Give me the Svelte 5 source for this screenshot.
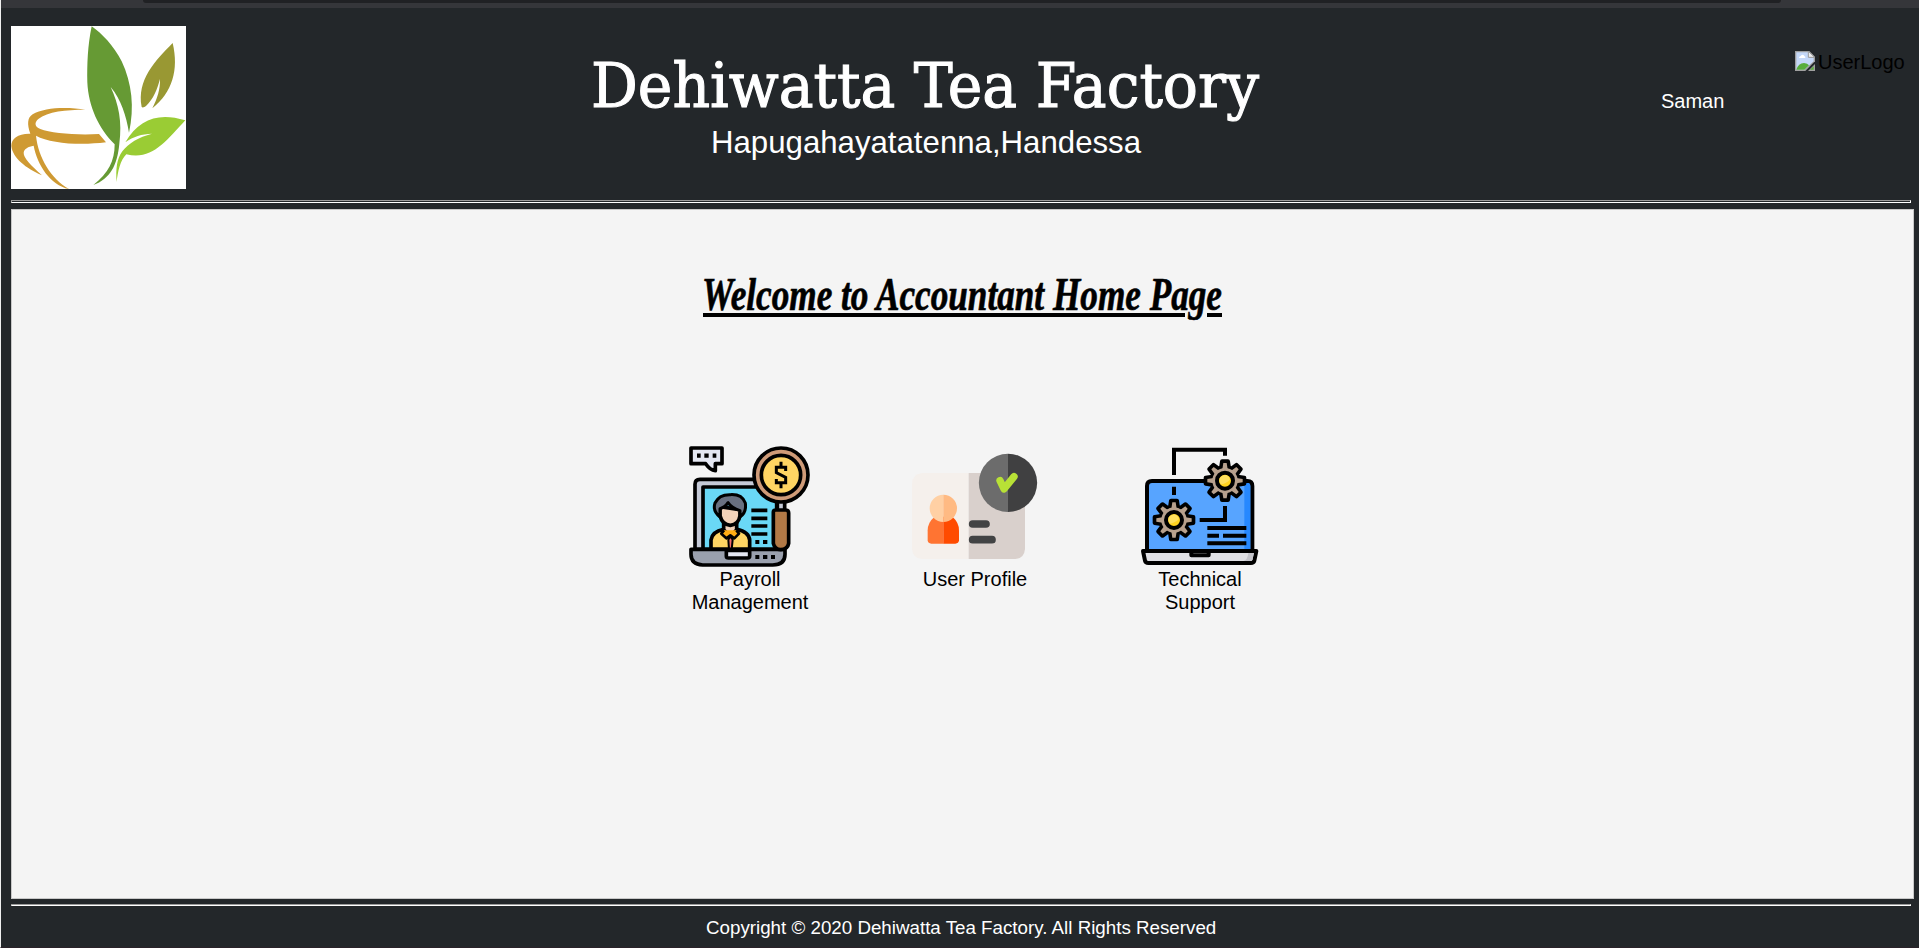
<script>
  const teeth = [0, 45, 90, 135, 180, 225, 270, 315];
  const gears = [
    { x: 132, y: 255 },
    { x: 285, y: 137 }
  ];
</script>

<div class="page">
  <div class="strip"><div class="pill"></div></div>

  <header>
    <svg class="logo" viewBox="33 78 525 489" preserveAspectRatio="none">
      <rect x="33" y="78" width="525" height="489" fill="#fff" />
      <path d="M256 329C205 320 132 321 98 343C82 353 81 373 91 401C54 400 34 415 34 438C38 474 78 505 126 526C93 496 70 473 71 458C73 446 84 440 101 437C111 493 150 555 207 567C153 536 115 473 108 407C150 430 239 437 318 427L297 402C232 406 153 400 121 387C103 380 103 367 115 357C143 334 198 329 256 329Z" fill="#cf9a33" />
      <path d="M275 79C263 137 261 194 262 247C265 319 297 388 344 433C344 484 325 519 280 555C330 536 352 497 358 431C367 366 356 312 332 261C363 298 379 348 387 398C404 323 396 250 365 184C341 137 306 101 275 79Z" fill="#669a34" />
      <path d="M518 129C465 183 410 239 425 321C428 324 434 321 438 318C460 298 472 267 480 237C481 267 472 295 457 325C517 277 537 210 518 129Z" fill="#999833" />
      <path d="M556 361C477 337 418 355 376 427C401 409 424 402 456 401C416 411 385 430 367 454C350 476 347 510 350 546C353 516 361 480 379 463C456 482 497 424 556 361Z" fill="#9acc34" />
    </svg>

    <div class="brand">
      <svg class="title" width="670" height="84" viewBox="0 0 670 84">
        <text x="1" y="63" textLength="668" lengthAdjust="spacingAndGlyphs">Dehiwatta Tea Factory</text>
      </svg>
      <div class="address">Hapugahayatatenna,Handessa</div>
    </div>

    <div class="user">Saman</div>
    <div class="avatar">
      <svg width="20" height="20" viewBox="0 0 60 60">
        <path d="M0 0H43L60 17V31L31 60H0Z" fill="#a0a0a0" />
        <path d="M4 4H40L56 20V31L28 56H4Z" fill="#c5d8f8" />
        <path d="M12 21Q12 16 17 15Q23 7 28 15Q32 16 31 21Z" fill="#fff" />
        <path d="M4 56Q10 37 27 36Q38 37 42 43L28 56Z" fill="#58ad3b" />
        <path d="M40 1V19H59Z" fill="#eee" stroke="#999" stroke-width="3" />
        <path d="M60 39V60H39Z" fill="#a0a0a0" />
        <path d="M56 46V56H45Z" fill="#58ad3b" />
      </svg>
      <span>UserLogo</span>
    </div>
  </header>

  <div class="rule top"></div>

  <main>
    <svg class="welcome" width="526" height="60" viewBox="0 0 526 60">
      <text x="2" y="43" textLength="520" lengthAdjust="spacingAndGlyphs">Welcome to Accountant Home Page</text>
      <path d="M3 48H485M507 48H522" stroke="#000" stroke-width="4" />
    </svg>

    <div class="menu">
      <div class="item">
        <svg width="140" height="133" viewBox="0 0 420 399" stroke="#000" stroke-width="11" stroke-linejoin="round">
          <path d="M33 39H126V86H106V107Q90 105 77 86H33Z" fill="#e4e7f2" />
          <path d="M51 62H62M73 62H86M98 62H109" fill="none" stroke-width="13" />
          <path d="M45 343V148Q45 133 60 133H300V343Z" fill="#c5cad7" />
          <path d="M69 343V156H290V343Z" fill="#6ad8f6" />
          <path d="M214 226H262M214 250H262M214 273H262M214 297H262" />
          <path d="M226 321H238M249 321H262" stroke-width="12" />
          <path d="M93 343V315Q96 290 131 283H170Q207 290 209 315V343Z" fill="#ffd563" />
          <path d="M131 262V284L151 305L170 284V262Z" fill="#f2d2b9" />
          <path d="M120 215V242Q127 269 151 271Q176 268 180 242V224Z" fill="#f2d2b9" />
          <path d="M120 246Q97 228 105 204Q117 178 151 179Q186 177 196 204Q200 233 180 246V227Q154 219 144 203Q135 217 120 221Z" fill="#697080" stroke-width="9" />
          <path d="M132 286L124 296L139 310L151 301L163 310L177 296L169 286" fill="#ffad13" stroke-width="8" />
          <path d="M151 304L145 314L147 344H155L158 314Z" fill="#f06b6d" stroke-width="6" />
          <path d="M33 343H315V358Q315 390 278 390H68Q33 388 33 358Z" fill="#9aa0ad" />
          <path d="M139 346V364Q139 369 146 369H203Q209 369 209 363V346Z" fill="#e4e7f2" />
          <path d="M226 366H238M249 366H262M273 366H285" stroke-width="12" />
          <path d="M292 196V230H314V196Z" fill="#c5cad7" />
          <path d="M280 231Q280 225 287 225H317Q326 225 326 234V325Q323 343 302 344Q284 343 280 325Z" fill="#b27946" />
          <circle cx="303" cy="120" r="81" fill="#cf9b78" />
          <circle cx="303" cy="120" r="59" fill="#ffd563" />
          <path d="M317 108V97H289V113L317 127V143H289V132M303 80V97M303 143V160" fill="none" stroke-width="9" stroke-linejoin="miter" />
        </svg>
        <div>Payroll<br />Management</div>
      </div>

      <div class="item">
        <svg width="140" height="133" viewBox="15 -15 420 399">
          <path d="M206 99H66Q36 103 36 132V327Q38 355 66 357H206Z" fill="#f5f0ec" />
          <path d="M206 99H346Q375 102 375 132V327Q373 355 346 357H206Z" fill="#d9d0cc" />
          <path d="M130 230H104Q83 247 83 271V301Q84 311 94 311H130Z" fill="#ff7432" />
          <path d="M130 230H157Q177 247 177 271V301Q176 311 166 311H130Z" fill="#ff4b00" />
          <path d="M130 164A41 41 0 0 0 130 246Z" fill="#ffd0a4" />
          <path d="M130 164A41 41 0 0 1 130 246Z" fill="#ffba83" />
          <path d="M218 252H258M218 299H276" stroke="#424344" stroke-width="23" stroke-linecap="round" />
          <path d="M324 41A87.500 87.500 0 0 0 324 216Z" fill="#6c6c6c" />
          <path d="M324 41A87.500 87.500 0 0 1 324 216Z" fill="#404041" />
          <path d="M300 122L312 147L342 110" fill="none" stroke="#b8e136" stroke-width="22" stroke-linecap="round" stroke-linejoin="round" />
        </svg>
        <div>User Profile</div>
      </div>

      <div class="item">
        <svg width="140" height="133" viewBox="0 0 420 399" stroke="#000" stroke-width="12" stroke-linejoin="round">
          <path d="M51 348V153Q51 138 66 138H352Q367 138 367 153V348Z" fill="#57a4ff" />
          <path d="M343 144H356Q361 145 361 154V343H343Z" fill="#2688ff" stroke="none" />
          <path d="M132 120V44H285V62M132 155V180M285 213V255H209" fill="none" stroke-linejoin="miter" />
          <path d="M232 279H349M232 302H267M279 302H349M232 325H349" />
          <path d="M39 348H184V361H236V348H379L373 377Q371 384 363 384H55Q47 384 45 377Z" fill="#e0e0e4" />
          <path d="M355 354H372L367 376L360 378H340Q353 375 355 354Z" fill="#c5c5cb" stroke="none" />
          {#each gears as g}
            <g transform="translate({g.x} {g.y})">
              <circle r="46" stroke="none" />
              {#each teeth as a}
                <path d="M-12 -38L-9 -58H9L12 -38Z" transform="rotate({a})" />
              {/each}
              <circle r="38" fill="#b8a18d" stroke="none" />
              {#each teeth as a}
                <path d="M-8 -34L-5 -53H5L8 -34Z" transform="rotate({a})" fill="#b8a18d" stroke="none" />
              {/each}
              <circle r="24" fill="#ffd31f" />
              <path d="M-16 -8Q-6 -19 5 -16Q13 -12 15 -3Q1 10 -12 11Q-19 3 -16 -8Z" fill="#ffe05e" stroke="none" />
            </g>
          {/each}
        </svg>
        <div>Technical<br />Support</div>
      </div>
    </div>
  </main>

  <div class="rule bottom"></div>
  <footer>Copyright © 2020 Dehiwatta Tea Factory. All Rights Reserved</footer>
</div>

<style>
  :global(body) { margin: 0; background: #23272a; }
  .page {
    box-sizing: border-box;
    width: 1919px;
    height: 948px;
    overflow: hidden;
    background: #23272a;
    border-left: 1px solid #f0f0f0;
    border-bottom: 1px solid #2a2229;
    font: 20px/23px "Liberation Sans", Arial, sans-serif;
    color: #fff;
  }
  .page svg { display: block; flex: none; overflow: visible; }
  .strip { height: 8px; background: #35363a; }
  .pill {
    height: 3px;
    margin: 0 138px 0 142px;
    background: #202124;
    border-radius: 0 0 14px 14px;
  }
  header {
    display: flex;
    align-items: flex-start;
    height: 192px;
    padding-left: 10px;
  }
  .logo { width: 175px; height: 163px; margin-top: 18px; }
  .brand { width: 670px; margin: 36px 0 0 404px; text-align: center; }
  .title text {
    font: 61px "DejaVu Serif Condensed", "DejaVu Serif", serif;
    fill: #fff;
    stroke: #fff;
    stroke-width: 1px;
  }
  .address { margin-top: -3px; padding-left: 2px; font-size: 31.2px; line-height: 36px; }
  .user { margin: 82px 0 0 401px; width: 64px; }
  .avatar { display: flex; margin: 43px 0 0 70px; color: #000; }
  .avatar span { margin-left: 3px; }
  .rule {
    box-sizing: border-box;
    width: 1900px;
    margin-left: 10px;
    border: 1px solid;
    border-color: #9a9a9a #fff #fff #9a9a9a;
  }
  .rule.top { height: 3px; }
  .rule.bottom { height: 2px; margin-top: 5px; }
  main {
    box-sizing: border-box;
    display: flex;
    flex-direction: column;
    align-items: flex-start;
    width: 1903px;
    height: 690px;
    margin: 6px 0 0 10px;
    border: 1px solid #c8c8c8;
    background: #f4f4f4;
    color: #000;
  }
  .welcome { margin: 57px 0 0 688px; }
  .welcome text {
    font: italic bold 46px "Liberation Serif", serif;
    stroke: #000;
    stroke-width: 0.7px;
  }
  .menu { display: flex; gap: 85px; margin: 108px 0 0 668px; }
  .item { width: 140px; text-align: center; }
  footer { margin: 10px 0 0 705px; font-size: 18.75px; white-space: nowrap; }
</style>
